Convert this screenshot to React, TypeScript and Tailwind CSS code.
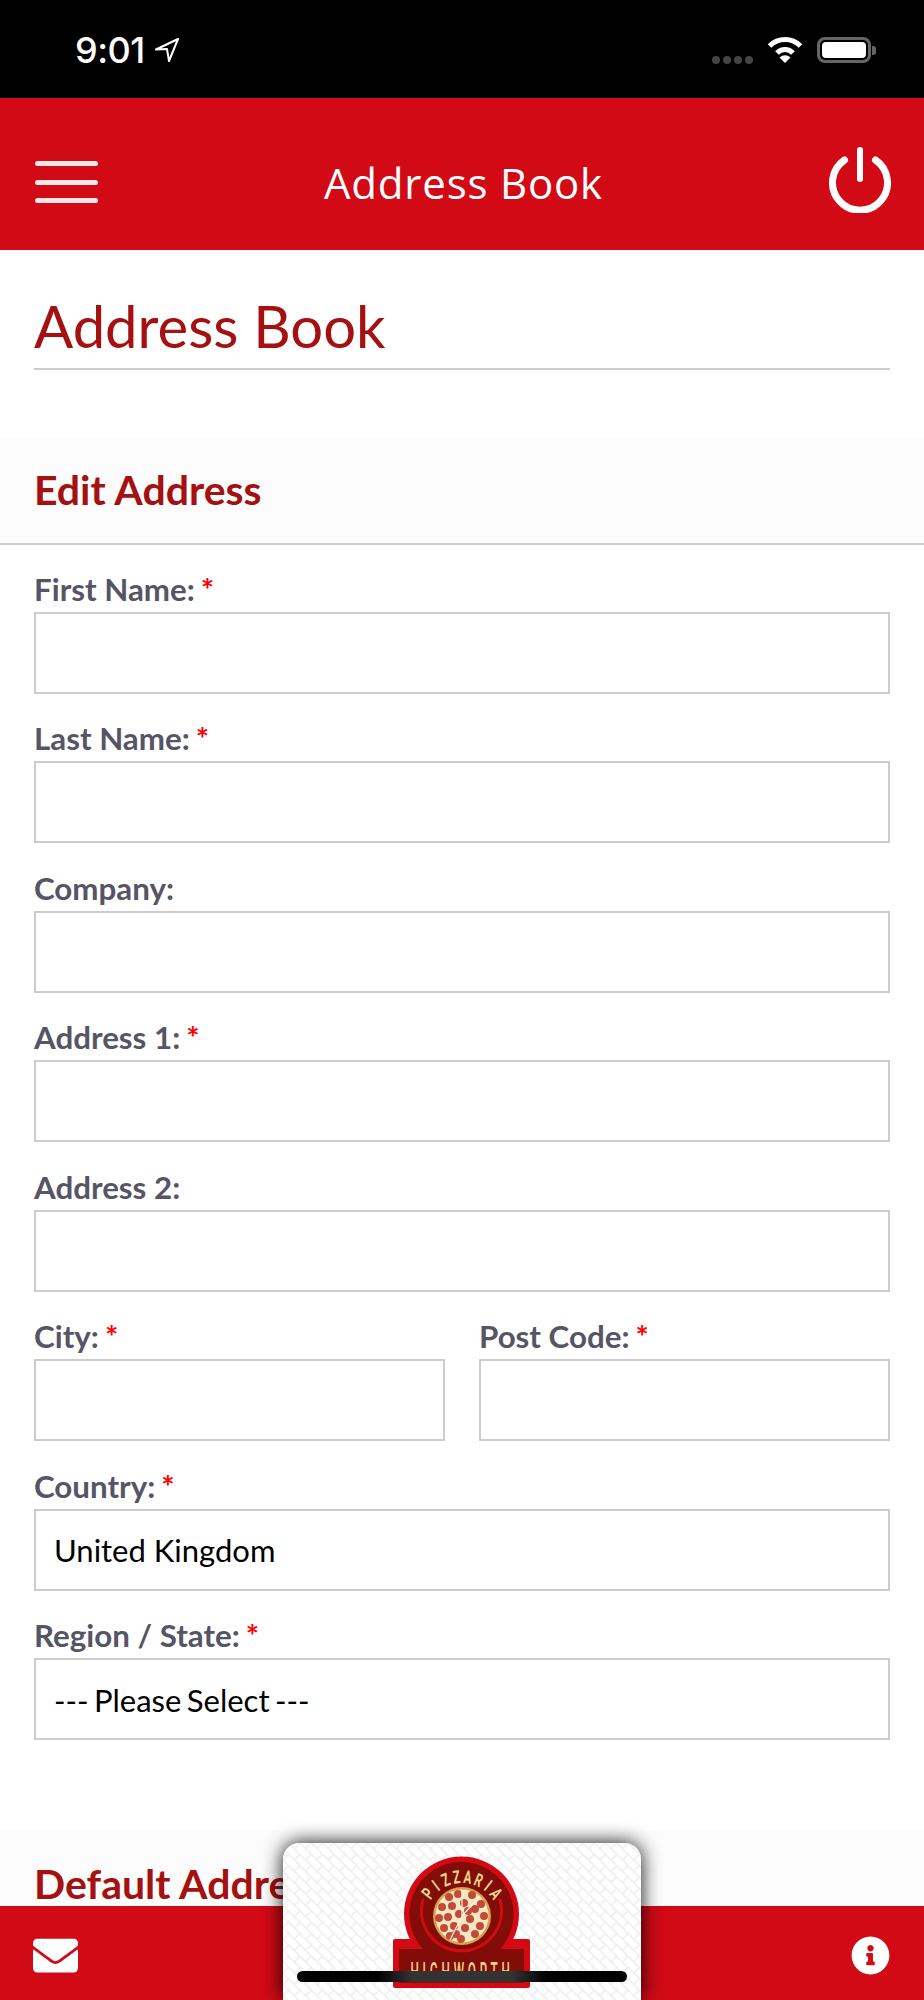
import { FaEnvelope, FaInfoCircle } from "react-icons/fa";

const pepperoni = [
  [57, 43], [66, 40], [80, 41], [89, 50], [50, 53], [60, 52], [72, 49], [83, 55], [92, 62],
  [47, 64], [56, 63], [67, 60], [78, 65], [88, 72], [52, 74], [62, 72], [73, 74], [83, 80],
  [58, 82], [69, 85], [76, 57], [64, 80],
];

function Field({ label, required, children }: { label: string; required?: boolean; children?: React.ReactNode }) {
  return (
    <div className="pt-[29.5px]">
      <label className="block h-[38px] text-[31.3px] font-bold leading-[30px] text-[#555566]">
        {label}
        {required && <span className="ml-[6px] text-[#ff0000]">*</span>}
      </label>
      {children ?? <input type="text" className="block h-[82px] w-full border-2 border-[#cccccc] bg-white" />}
    </div>
  );
}

function SelectBox({ value, className }: { value: string; className?: string }) {
  return (
    <div className={`flex h-[82px] w-full items-center border-2 border-[#cccccc] bg-white px-[18px] pt-[2px] text-[31px] text-black ${className ?? ""}`}>
      {value}
    </div>
  );
}

function Logo() {
  return (
    <svg viewBox="0 0 140 136" className="h-[136px] w-[140px]">
      <circle cx="69.500" cy="60" r="57.500" fill="#d30a14" />
      <rect x="1" y="85" width="137" height="49" rx="2" fill="#d30a14" />
      <circle cx="69.500" cy="60" r="52" fill="#820c08" />
      <rect x="7" y="95" width="125" height="34" fill="#820c08" />
      <path d="M 31 46 A 40 40 0 1 0 108 46" fill="none" stroke="#d30a14" strokeWidth="3" strokeLinecap="round" />
      {"PIZZARIA".split("").map((letter, i) => {
        const angle = -52 + i * 14.9;
        const rad = (angle * Math.PI) / 180;
        const x = 70 + 37 * Math.sin(rad);
        const y = 66 - 37 * Math.cos(rad);
        return (
          <text
            key={i}
            transform={`translate(${x} ${y}) rotate(${angle}) scale(0.65 1)`}
            textAnchor="middle"
            fontFamily="Roboto, sans-serif"
            fontSize="18"
            fontWeight="700"
            fill="#f0d58a"
          >
            {letter}
          </text>
        );
      })}
      <circle cx="70" cy="62" r="29" fill="#d9a24a" />
      <circle cx="70" cy="62" r="26.500" fill="#f5e6c4" />
      {pepperoni.map(([x, y], i) => (
        <circle key={i} cx={x} cy={y} r="4" fill="#c44a38" />
      ))}
      <path d="M70 36v26M70 62l18-20M70 62l-12 24" stroke="#fff6e0" strokeWidth="1.200" fill="none" />
      <text
        transform="translate(70 128) scale(0.42 1)"
        textAnchor="middle"
        fontFamily="Roboto, sans-serif"
        fontSize="28"
        fontWeight="500"
        letterSpacing="9"
        fill="#f0d58a"
      >
        HIGHWORTH
      </text>
    </svg>
  );
}

export default function App() {
  return (
    <div className="relative flex h-[2000px] w-[924px] flex-col overflow-hidden bg-white font-['Lato',sans-serif]">
      {/* status bar */}
      <div className="flex h-[98px] shrink-0 items-start justify-between bg-black pl-[75px] pr-[48px] pt-[30px] text-white">
        <div className="flex items-center">
          <span className="font-['Inter',sans-serif] text-[36px] font-medium leading-[40px] tracking-[-0.5px]">9:01</span>
          <svg viewBox="0 0 26 26" className="ml-[9px] h-[26px] w-[26px]" fill="none" stroke="white" strokeWidth="2" strokeLinejoin="round">
            <path d="M24 2 2 12.500l11-.5 2 12z" />
          </svg>
        </div>
        <div className="flex items-start pt-[7px]">
          <div className="mt-[19px] flex gap-[3px]">
            <i className="block h-[8px] w-[8px] rounded-full bg-[#444444]" />
            <i className="block h-[8px] w-[8px] rounded-full bg-[#444444]" />
            <i className="block h-[8px] w-[8px] rounded-full bg-[#444444]" />
            <i className="block h-[8px] w-[8px] rounded-full bg-[#444444]" />
          </div>
          <svg viewBox="0 0 36 26" className="ml-[14px] h-[26px] w-[36px]" fill="none" stroke="white">
            <path d="M2.500 9A22 22 0 0 1 33.500 9" strokeWidth="5" />
            <path d="M10 16A11 11 0 0 1 26 16" strokeWidth="5" />
            <path d="M18 26 12.500 20.500A8 8 0 0 1 23.500 20.500z" fill="white" stroke="none" />
          </svg>
          <div className="ml-[14px] flex items-center">
            <div className="h-[26px] w-[54px] rounded-[8px] border-[3px] border-[#666666] p-[2px]">
              <div className="h-full w-full rounded-[4px] bg-white" />
            </div>
            <div className="ml-[1px] h-[9px] w-[4px] rounded-r-[3px] bg-[#666666]" />
          </div>
        </div>
      </div>

      {/* header */}
      <div className="flex h-[152px] shrink-0 items-center justify-between bg-[#d20a16] pl-[35px] pr-[33px] pt-[16px] text-white">
        <div className="flex w-[63px] flex-col gap-[13.500px]">
          <div className="h-[5px] rounded-full bg-white/90 blur-[0.5px]" />
          <div className="h-[5px] rounded-full bg-white/90 blur-[0.5px]" />
          <div className="h-[5px] rounded-full bg-white/90 blur-[0.5px]" />
        </div>
        <h1 className="font-['Open_Sans',sans-serif] text-[42px] font-medium tracking-[0.8px] text-white">Address Book</h1>
        <svg viewBox="0 0 62 66" className="-mt-[5px] h-[66px] w-[62px]" fill="none" stroke="white" strokeWidth="7" strokeLinecap="round">
          <path d="M15.500 13A27.500 27.500 0 1 0 46.500 13" />
          <path d="M31 3v29" strokeWidth="6" />
        </svg>
      </div>

      {/* content */}
      <main className="min-h-0 flex-1 overflow-hidden">
        <div className="px-[34px] pt-[33px]">
          <h2 className="border-b-2 border-[#cccccc] text-[58px] leading-[85px] text-[#a51010]">Address Book</h2>
        </div>
        <section className="mt-[68px]">
          <div className="flex h-[107px] items-center border-b-2 border-[#cccccc] bg-[#fcfcfc] px-[34px] pb-[2px]">
            <h3 className="text-[41px] font-bold text-[#a51010]">Edit Address</h3>
          </div>
          <form className="-mt-[1px] px-[34px]">
            <Field label="First Name:" required />
            <Field label="Last Name:" required />
            <Field label="Company:" />
            <Field label="Address 1:" required />
            <Field label="Address 2:" />
            <div className="grid grid-cols-2 gap-[34px]">
              <Field label="City:" required />
              <Field label="Post Code:" required />
            </div>
            <Field label="Country:" required>
              <SelectBox value="United Kingdom" />
            </Field>
            <Field label="Region / State:" required>
              <SelectBox value="--- Please Select ---" className="[word-spacing:-2.5px]" />
            </Field>
          </form>
        </section>
        <section className="mt-[90px]">
          <div className="flex h-[107px] items-center bg-[#fcfcfc] px-[34px]">
            <h3 className="text-[41px] font-bold text-[#a51010]">Default Address</h3>
          </div>
        </section>
      </main>

      {/* bottom bar */}
      <div className="absolute bottom-0 left-0 right-0 flex h-[94px] items-start justify-between bg-[#d20a16] pl-[33px] pr-[34px] pt-[30px] text-white">
        <FaEnvelope className="-mt-[3px] h-[45px] w-[45px]" />
        <FaInfoCircle className="h-[39px] w-[39px]" />
      </div>

      {/* logo card */}
      <div className="absolute bottom-0 left-[283px] flex h-[157px] w-[358px] justify-center overflow-hidden rounded-t-[16px] bg-white pt-[11px] shadow-[0_0_20px_rgba(0,0,0,0.95)]">
        <svg className="absolute inset-0 h-full w-full" aria-hidden="true">
          <defs>
            <pattern id="weave" width="16" height="16" patternUnits="userSpaceOnUse" patternTransform="rotate(45)">
              <path d="M0 4h16M0 12h16M4 0v4M12 4v8M4 12v4" stroke="#eeeeee" strokeWidth="1.500" fill="none" />
            </pattern>
          </defs>
          <rect width="100%" height="100%" fill="url(#weave)" />
        </svg>
        <div className="relative">
          <Logo />
        </div>
      </div>

      {/* home indicator */}
      <div className="absolute bottom-[18px] left-[297px] h-[11px] w-[330px] rounded-full bg-[linear-gradient(90deg,#000_24%,#333_35%,#333_65%,#000_76%)]" />
    </div>
  );
}
